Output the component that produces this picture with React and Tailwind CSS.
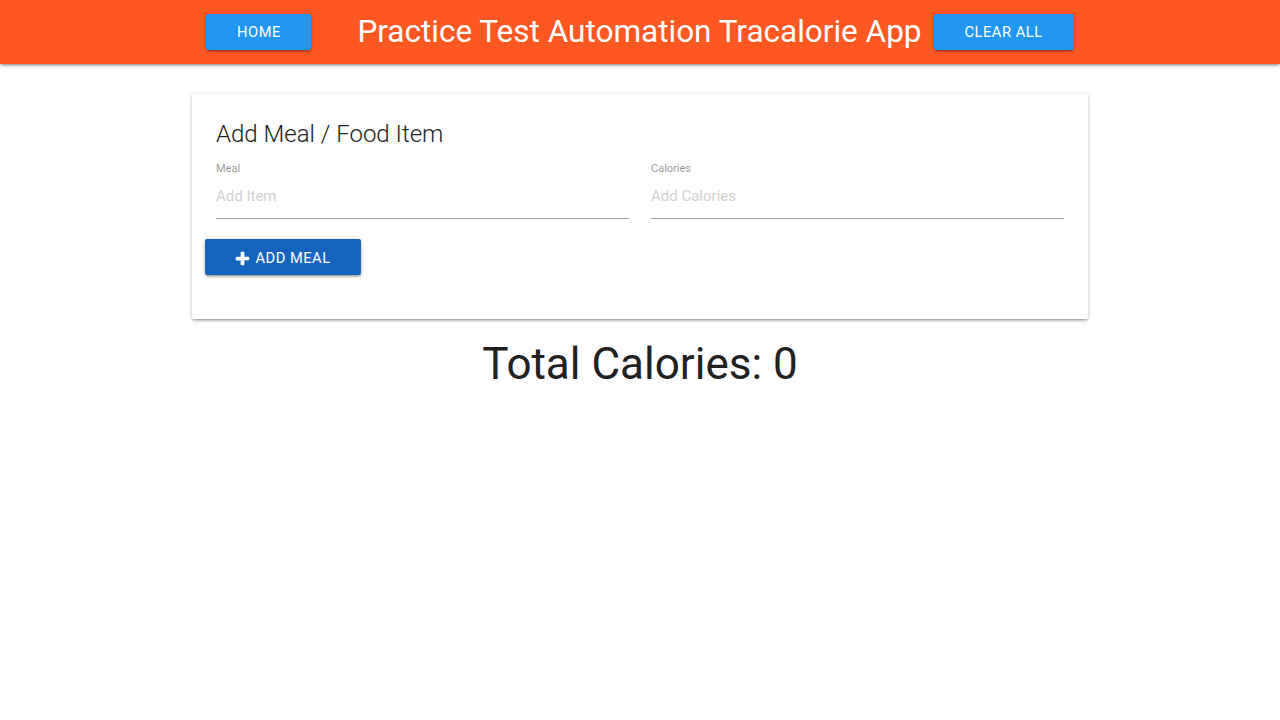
import { useState } from 'react';

function PlusIcon() {
  return (
    <svg viewBox="0 0 16 16" className="w-[15px] h-[15px]" fill="#ffffff">
      <path d="M6 1.5c0-.4.3-.7.7-.7h2.6c.4 0 .7.3.7.7V6h4.5c.4 0 .7.3.7.7v2.6c0 .4-.3.7-.7.7H10v4.5c0 .4-.3.7-.7.7H6.7c-.4 0-.7-.3-.7-.7V10H1.5c-.4 0-.7-.3-.7-.7V6.7c0-.4.3-.7.7-.7H6z" />
    </svg>
  );
}

function Field({ label, placeholder, value, onChange }) {
  return (
    <div className="flex flex-col">
      <label className="pt-px text-[11px] leading-[14px] text-[#9e9e9e]">{label}</label>
      <input
        type="text"
        value={value}
        onChange={(e) => onChange(e.target.value)}
        placeholder={placeholder}
        className="h-[43px] w-full border-b border-[#9e9e9e] bg-transparent pb-0.5 text-[15px] text-[#212121] outline-none placeholder-[#d1d1d1]"
      />
    </div>
  );
}

export default function App() {
  const [meal, setMeal] = useState('');
  const [calories, setCalories] = useState('');

  return (
    <div className="min-h-[720px] bg-white font-['Roboto',sans-serif] text-[#212121]">
      {/* Nav */}
      <nav className="h-16 bg-[#ff5722] shadow-[0_2px_2px_0_rgba(0,0,0,0.14),0_3px_1px_-2px_rgba(0,0,0,0.12),0_1px_5px_0_rgba(0,0,0,0.2)]">
        <div className="flex h-full items-center justify-center">
          <button
            type="button"
            className="h-9 w-[105px] rounded-[2px] bg-[#2196f3] text-[14.7px] tracking-[0.5px] text-white uppercase shadow-[0_2px_2px_0_rgba(0,0,0,0.14),0_3px_1px_-2px_rgba(0,0,0,0.12),0_1px_5px_0_rgba(0,0,0,0.2)]"
          >
            Home
          </button>
          <h1 className="ml-[46px] text-[31.5px] leading-[64px] text-white">
            Practice Test Automation Tracalorie App
          </h1>
          <button
            type="button"
            className="ml-3 h-9 w-[140px] rounded-[2px] bg-[#2196f3] text-[14.7px] tracking-[0.5px] text-white uppercase shadow-[0_2px_2px_0_rgba(0,0,0,0.14),0_3px_1px_-2px_rgba(0,0,0,0.12),0_1px_5px_0_rgba(0,0,0,0.2)]"
          >
            Clear All
          </button>
        </div>
      </nav>

      {/* Card */}
      <div className="mx-auto mt-[30px] w-[896px]">
        <div className="rounded-[2px] bg-white p-6 shadow-[0_2px_2px_0_rgba(0,0,0,0.14),0_3px_1px_-2px_rgba(0,0,0,0.12),0_1px_5px_0_rgba(0,0,0,0.2)]">
          <span className="block text-2xl leading-8 font-light text-[#212121]">Add Meal / Food Item</span>
          <div className="mt-[11px] grid grid-cols-2 gap-[22px]">
            <Field label="Meal" placeholder="Add Item" value={meal} onChange={setMeal} />
            <Field label="Calories" placeholder="Add Calories" value={calories} onChange={setCalories} />
          </div>
          <button
            type="button"
            className="-ml-[11px] mt-5 mb-5 flex h-9 w-[156px] items-center justify-center gap-[5px] rounded-[2px] bg-[#1565c0] pt-0.5 text-[14.7px] tracking-[0.5px] text-white uppercase shadow-[0_2px_2px_0_rgba(0,0,0,0.14),0_3px_1px_-2px_rgba(0,0,0,0.12),0_1px_5px_0_rgba(0,0,0,0.2)]"
          >
            <PlusIcon />
            Add Meal
          </button>
        </div>

        <h3 className="mt-5 text-center text-[44px] leading-[51px] text-[#212121]">Total Calories: 0</h3>
      </div>
    </div>
  );
}
